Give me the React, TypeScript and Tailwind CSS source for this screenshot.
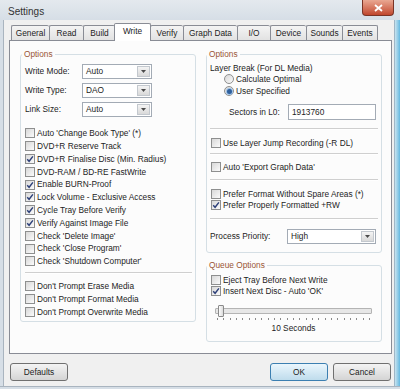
import React from 'react';

const tabs: { label: string; w: string; active?: boolean }[] = [
  { label: 'General', w: 'w-[38px]' },
  { label: 'Read', w: 'w-[34px]' },
  { label: 'Build', w: 'w-[32px]' },
  { label: 'Write', w: 'w-[37px]', active: true },
  { label: 'Verify', w: 'w-[33px]' },
  { label: 'Graph Data', w: 'w-[54px]' },
  { label: 'I/O', w: 'w-[33px]' },
  { label: 'Device', w: 'w-[36px]' },
  { label: 'Sounds', w: 'w-[36px]' },
  { label: 'Events', w: 'w-[36px]' },
];

const leftChecks: [string, boolean][] = [
  ["Auto 'Change Book Type' (*)", false],
  ['DVD+R Reserve Track', false],
  ['DVD+R Finalise Disc (Min. Radius)', true],
  ['DVD-RAM / BD-RE FastWrite', false],
  ['Enable BURN-Proof', true],
  ['Lock Volume - Exclusive Access', true],
  ['Cycle Tray Before Verify', true],
  ['Verify Against Image File', true],
  ["Check 'Delete Image'", false],
  ["Check 'Close Program'", false],
  ["Check 'Shutdown Computer'", false],
];

const promptChecks = ["Don't Prompt Erase Media", "Don't Prompt Format Media", "Don't Prompt Overwrite Media"];

const Box: React.FC<{ checked?: boolean }> = ({ checked }) => (
  <span className="w-[10px] h-[10px] shrink-0 border border-[#8e8f8f] bg-linear-to-br from-[#d8d8d8] to-[#fbfbfb] flex items-center justify-center">
    {checked && (
      <svg width="8" height="8" viewBox="0 0 8 8">
        <path d="M1.2 4.2 L3.1 6.3 L6.9 1.4" fill="none" stroke="#2c3f78" strokeWidth="1.4" />
      </svg>
    )}
  </span>
);

const Radio: React.FC<{ on?: boolean }> = ({ on }) => (
  <span className="w-[10px] h-[10px] shrink-0 rounded-full border border-[#8e8f8f] bg-linear-to-br from-[#d6d6d6] to-[#fbfbfb] flex items-center justify-center">
    {on && <span className="w-[5px] h-[5px] rounded-full bg-[#2f5f9c] ring-1 ring-[#9cc0e6]" />}
  </span>
);

const Combo: React.FC<{ value: string; w: string }> = ({ value, w }) => (
  <div className={`flex h-[15px] border border-[#a3abb5] bg-white ${w}`}>
    <span className="flex-1 pl-[3px] flex items-center">{value}</span>
    <span className="w-[13px] m-[1px] border border-[#c3c8ce] bg-linear-to-b from-[#f4f4f4] to-[#d9d9d9] flex items-center justify-center">
      <svg width="5" height="3" viewBox="0 0 5 3">
        <path d="M0 0 H5 L2.5 3 Z" fill="#4a4a4a" />
      </svg>
    </span>
  </div>
);

const Sep: React.FC<{ className: string }> = ({ className }) => (
  <div className={`h-[2px] border-t border-[#cfcfcf] border-b border-b-white ${className}`} />
);

const Legend: React.FC<{ children: React.ReactNode }> = ({ children }) => (
  <legend className="-ml-[3px] px-[2px] leading-[10px] text-[#9a5535]">{children}</legend>
);

const Button: React.FC<{ children: React.ReactNode; primary?: boolean }> = ({ children, primary }) => (
  <div
    className={
      primary
        ? 'w-[58px] h-[18px] rounded-[3px] border border-[#3c7fb1] bg-linear-to-b from-[#eaf6fd] to-[#bfdcec] flex items-center justify-center'
        : 'w-[58px] h-[18px] rounded-[3px] border border-[#707070] bg-linear-to-b from-[#f4f4f4] to-[#d4d4d4] flex items-center justify-center'
    }
  >
    {children}
  </div>
);

export default function App() {
  return (
    <div className="w-[400px] h-[389px] flex flex-col bg-[#d4dde5] font-['Liberation_Sans',Arial,sans-serif] text-[8.3px] text-[#1c1c1c] overflow-hidden">
      {/* title bar */}
      <div className="h-[20px] flex items-start bg-linear-to-b from-[#e4e9ee] to-[#d6dee6]">
        <span className="ml-[8px] mt-[4px] text-[10px] text-[#333]">Settings</span>
        <div className="ml-auto mr-[6px] w-[32px] h-[16px] rounded-b-[4px] border border-t-0 border-[#7a3426] bg-linear-to-b from-[#e9a792] to-[#c0462d] flex items-center justify-center">
          <svg width="9" height="8" viewBox="0 0 9 8">
            <path d="M1 1 L8 7 M8 1 L1 7" stroke="white" strokeWidth="1.8" />
          </svg>
        </div>
      </div>

      <div className="flex-1 flex">
        <div className="w-[4px] bg-[#d6dee6] border-r border-[#a9b4bf]" />
        <div className="flex-1 bg-[#f0f0f0] pt-[3px] pl-[5px] pr-[2px]">
          {/* tabs */}
          <div className="h-[17px] pl-[2px] flex items-end">
            {tabs.map((t, i) =>
              t.active ? (
                <div
                  key={t.label}
                  className={`${t.w} h-[18px] -mb-px -mx-[1px] relative z-10 bg-white border-l border-t border-r border-[#898c95] rounded-t-[2px] flex items-center justify-center pb-[2px]`}
                >
                  {t.label}
                </div>
              ) : (
                <div
                  key={t.label}
                  className={`${t.w} h-[15px] border-l border-t border-[#898c95] rounded-t-[2px] bg-linear-to-b from-[#f4f4f4] to-[#e2e2e2] flex items-center justify-center ${i === tabs.length - 1 ? 'border-r' : ''}`}
                >
                  {t.label}
                </div>
              )
            )}
          </div>

          {/* panel */}
          <div className="h-[314px] border border-[#898c95] bg-[#fcfcfc] pt-[8px] pl-[10px] flex gap-[10px]">
            {/* left options */}
            <fieldset className="w-[176px] h-[273px] border border-[#d5dfe5] rounded-[3px] pl-[4px] pr-[3px]">
              <Legend>Options</Legend>
              <div className="mt-[5px] flex flex-col gap-[4px]">
                {[
                  ['Write Mode:', 'Auto'],
                  ['Write Type:', 'DAO'],
                  ['Link Size:', 'Auto'],
                ].map(([l, v]) => (
                  <div key={l} className="flex items-center h-[15px]">
                    <span className="w-[57px]">{l}</span>
                    <Combo value={v} w="w-[70px]" />
                  </div>
                ))}
              </div>
              <div className="mt-[10px]">
                {leftChecks.map(([l, c]) => (
                  <div key={l} className="h-[12.8px] flex items-center gap-[2px]">
                    <Box checked={c} />
                    <span>{l}</span>
                  </div>
                ))}
              </div>
              <Sep className="mt-[4px] mb-[6px]" />
              {promptChecks.map((l) => (
                <div key={l} className="h-[13px] flex items-center gap-[2px]">
                  <Box />
                  <span>{l}</span>
                </div>
              ))}
            </fieldset>

            {/* right column */}
            <div className="flex flex-col gap-[7px]">
              <fieldset className="w-[176px] h-[204px] border border-[#d5dfe5] rounded-[3px] pl-[3px] pr-[3px]">
                <Legend>Options</Legend>
                <div className="mt-[4px] h-[10px] flex items-center">Layer Break (For DL Media)</div>
                <div className="pl-[14px]">
                  <div className="h-[12px] flex items-center gap-[2px]">
                    <Radio />
                    <span>Calculate Optimal</span>
                  </div>
                  <div className="h-[12px] flex items-center gap-[2px]">
                    <Radio on />
                    <span>User Specified</span>
                  </div>
                </div>
                <div className="mt-[7px] h-[16px] pl-[19px] flex items-center">
                  <span className="w-[59px]">Sectors in L0:</span>
                  <div className="w-[88px] h-[16px] border border-[#a3abb5] bg-white pl-[3px] flex items-center">1913760</div>
                </div>
                <Sep className="mt-[8px] mb-[7px]" />
                <div className="h-[12px] flex items-center gap-[2px] pl-[1px]">
                  <Box />
                  <span>Use Layer Jump Recording (-R DL)</span>
                </div>
                <Sep className="mt-[4px] mb-[6px]" />
                <div className="h-[12px] flex items-center gap-[2px] pl-[1px]">
                  <Box />
                  <span>Auto 'Export Graph Data'</span>
                </div>
                <Sep className="mt-[6px] mb-[7px]" />
                <div className="h-[11.5px] flex items-center gap-[2px] pl-[1px]">
                  <Box />
                  <span>Prefer Format Without Spare Areas (*)</span>
                </div>
                <div className="h-[11.5px] flex items-center gap-[2px] pl-[1px]">
                  <Box checked />
                  <span>Prefer Properly Formatted +RW</span>
                </div>
                <Sep className="mt-[7px]" />
                <div className="mt-[9px] h-[15px] flex items-center">
                  <span className="w-[77px]">Process Priority:</span>
                  <Combo value="High" w="w-[89px]" />
                </div>
              </fieldset>

              <fieldset className="w-[176px] h-[82px] border border-[#d5dfe5] rounded-[3px] pl-[3px] pr-[3px]">
                <Legend>Queue Options</Legend>
                <div className="mt-[4px]">
                  <div className="h-[11.5px] flex items-center gap-[2px] pl-[1px]">
                    <Box />
                    <span>Eject Tray Before Next Write</span>
                  </div>
                  <div className="h-[11.5px] flex items-center gap-[2px] pl-[1px]">
                    <Box checked />
                    <span>Insert Next Disc - Auto 'OK'</span>
                  </div>
                </div>
                <div className="ml-[5px] w-[157px]">
                  <div className="mt-[11px] h-[6px] relative border border-[#b4b4b4] bg-[#e7e7e7] rounded-[1px]">
                    <div className="absolute left-[2px] -top-[4px] w-[6px] h-[12px] border border-[#8a8a8a] rounded-[1px] bg-linear-to-r from-[#fdfdfd] to-[#dcdcdc]" />
                  </div>
                  <div className="mt-[4px] h-[2px] px-[2px] flex justify-between">
                    {Array.from({ length: 25 }).map((_, i) => (
                      <span key={i} className="w-px h-[2px] bg-[#8a8a8a]" />
                    ))}
                  </div>
                  <div className="mt-[3px] h-[10px] flex items-center justify-center">10 Seconds</div>
                </div>
              </fieldset>
            </div>
          </div>

          {/* buttons */}
          <div className="mt-[9px] flex items-center pl-[1px] pr-[1px]">
            <Button>Defaults</Button>
            <div className="ml-auto flex gap-[5px]">
              <Button primary>OK</Button>
              <Button>Cancel</Button>
            </div>
          </div>
        </div>
        <div className="w-[6px] border-l border-[#9fb6c6] bg-linear-to-r from-[#c7e3ef] to-[#62b8e0]" />
      </div>
      <div className="h-[3px] bg-[#d6dee6] border-t border-[#a9b4bf]" />
    </div>
  );
}
